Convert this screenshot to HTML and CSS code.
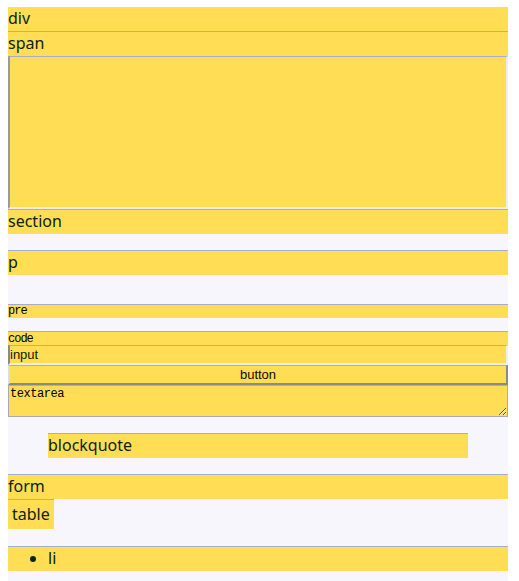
FILE: index.html
```html
<!DOCTYPE html>
<html lang="en">
<head>
<meta charset="utf-8">
<title>Elements</title>
<link rel="stylesheet" href="styles.css">
</head>
<body class="page">
<div class="row row-first">div</div>
<span class="row">span</span>
<div class="frame"></div>
<section class="row">section</section>
<p class="row para">p</p>
<pre class="mono pre">pre</pre>
<code class="mono code">code</code>
<input class="field" type="text" value="input">
<button class="btn" type="button">button</button>
<textarea class="area">textarea</textarea>
<blockquote class="row quote">blockquote</blockquote>
<form class="row form">form</form>
<table class="tbl"><tr><td class="cell">table</td></tr></table>
<ul class="list"><li class="item">li</li></ul>
</body>
</html>
```
FILE: styles.css
```css
html {
  background: #ffffff;
}

.page {
  margin: 7px 0 0 8px;
  width: 500px;
  background: #f8f6fd;
  display: flex;
  flex-direction: column;
  font-family: "Noto Sans", sans-serif;
  font-size: 16px;
  color: #0a2412;
  padding-bottom: 20px;
}

.row {
  display: block;
  margin: 0;
  background: #ffdd55;
  border-top: 1px solid #aaaacc;
  line-height: 22px;
  padding-bottom: 2px;
}

.row-first {
  border-top: none;
}

.frame {
  height: 150px;
  background: #ffdd55;
  border-top: 1px solid #aaaacc;
  border-left: 2px solid #9a9a9a;
  border-right: 2px solid #ececec;
  border-bottom: 2px solid #ececec;
}

.para {
  margin: 16px 0;
}

.mono {
  display: block;
  font-family: "Liberation Mono", monospace;
  font-size: 12px;
  letter-spacing: -1px;
  line-height: 13px;
  color: #000000;
  background: #ffdd55;
  border-top: 1px solid #aaaacc;
  margin: 0;
}

.pre {
  margin: 13px 0;
}

.code {
  padding-top: 1px;
  line-height: 12px;
}

.field {
  box-sizing: border-box;
  width: 100%;
  height: 20px;
  margin: 0;
  padding: 0;
  background: #ffdd55;
  border-top: 1px solid #aaaacc;
  border-left: 2px solid #8a8a8a;
  border-right: 2px solid #eeeeee;
  border-bottom: 2px solid #eeeeee;
  font-family: "Liberation Sans", sans-serif;
  font-size: 13px;
  color: #0a1a0a;
  outline: none;
}

.btn {
  box-sizing: border-box;
  width: 100%;
  height: 20px;
  margin: 0;
  padding: 0;
  background: #ffdd55;
  border-top: 1px solid #aaaacc;
  border-left: 2px solid #dddddd;
  border-right: 2px solid #8a8a8a;
  border-bottom: 2px solid #8a8a8a;
  font-family: "Liberation Sans", sans-serif;
  font-size: 13px;
  color: #0a0a0a;
}

.area {
  box-sizing: border-box;
  width: 100%;
  height: 32px;
  margin: 0;
  padding: 2px 1px;
  background: #ffdd55;
  border: 1px solid #aaaaaa;
  border-top-color: #aaaacc;
  font-family: "Liberation Mono", monospace;
  font-size: 12px;
  letter-spacing: -0.45px;
  line-height: 13px;
  color: #000000;
}

.quote {
  margin: 16px 40px;
}

.form {
  margin: 0;
}

.tbl {
  align-self: flex-start;
  border-collapse: collapse;
  border-spacing: 0;
  background: #ffdd55;
  border-top: 1px solid #aaaacc;
}

.cell {
  padding: 3px 4px 4px 4px;
  line-height: 22px;
  font-size: 16px;
}

.list {
  margin: 17px 0 0 0;
  padding: 0 0 0 40px;
  background: #ffdd55;
  border-top: 1px solid #aaaacc;
}

.item {
  line-height: 22px;
  padding-bottom: 2px;
}
```
